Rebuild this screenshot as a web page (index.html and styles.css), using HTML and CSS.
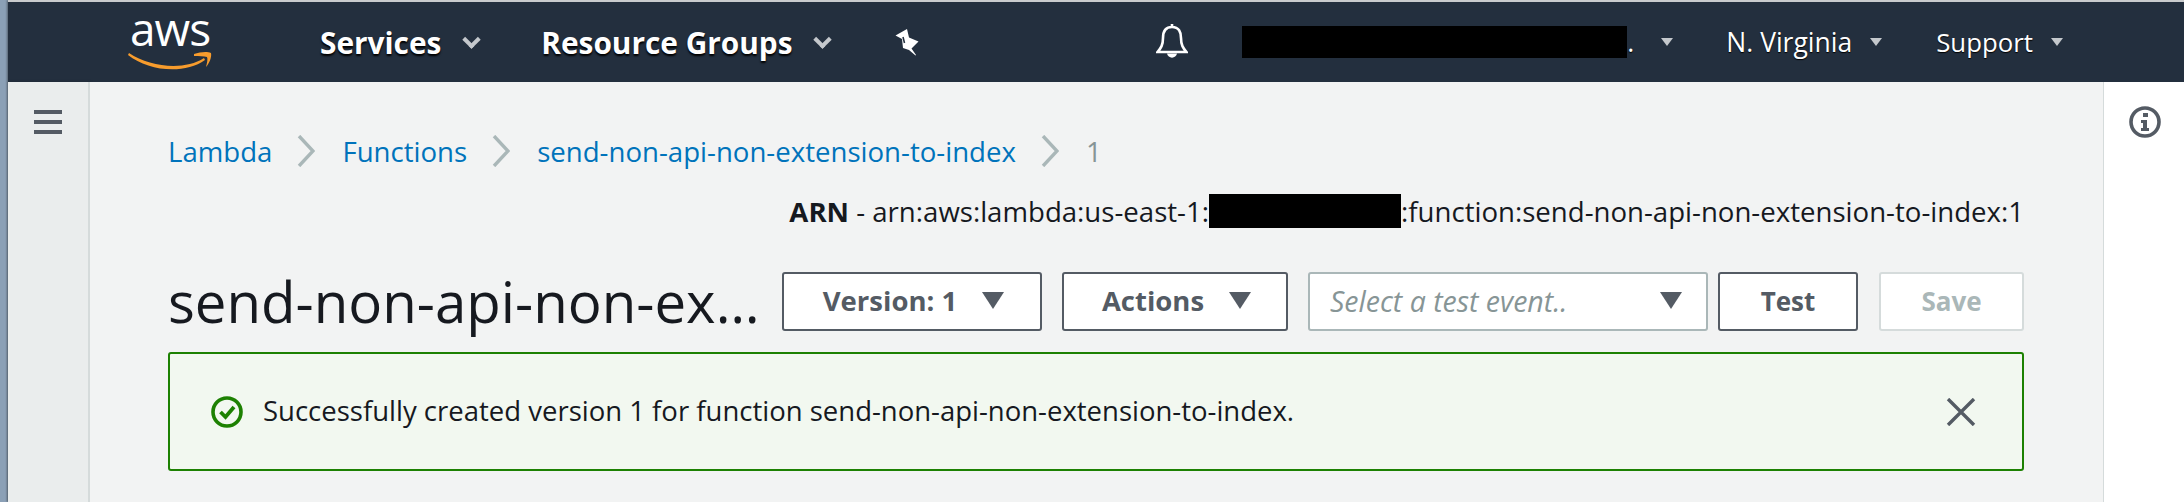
FILE: index.html
```html
<!DOCTYPE html>
<html lang="en">
<head>
    <meta charset="UTF-8">
    <title>Lambda - send-non-api-non-extension-to-index</title>
    <link rel="stylesheet" href="styles.css">
</head>
<body>
    <div class="window">
        <header class="nav">
            <div class="logo">
                <span class="logo-text">aws</span>
                <svg class="logo-smile" width="84" height="20" viewBox="0 0 84 20">
                    <path d="M1 2 C22 16 56 20 76 7 L77 9 C56 24 20 20 0 4 Z" fill="#f79c2d"/>
                    <path d="M66 3 C72 1 79 0 83 2 C84 6 81 13 78 16 C79 12 80 8 79 6 C76 5 71 5 66 5 Z" fill="#f79c2d"/>
                </svg>
            </div>
            <a class="nav-item nav-strong nav-services">Services<span class="caret caret-big"></span></a>
            <a class="nav-item nav-strong nav-groups">Resource Groups<span class="caret caret-big"></span></a>
            <svg class="pin" width="26" height="28" viewBox="0 0 26 28">
                <path d="M1.5 7.5 L13 1 L15 9.5 L24.5 13.5 L17.5 20.5 L22 27 L21.5 27.5 L15 22 L9 20 L8 11 Z" fill="#fff"/>
                <path d="M9 9 L10.5 15" stroke="#232f3e" stroke-width="1.6"/>
            </svg>
            <svg class="bell" width="32" height="36" viewBox="0 0 32 36">
                <path d="M16 0 V3 M16 3 C9 3 7 8 7 14 C7 21 5 24 1.5 28 H30.5 C27 24 25 21 25 14 C25 8 23 3 16 3 Z" fill="none" stroke="#fff" stroke-width="2.6"/>
                <path d="M11 29.5 C12 35 20 35 21 29.5 Z" fill="#fff"/>
            </svg>
            <span class="redacted redacted-account"></span>
            <a class="nav-item nav-dot">.<span class="caret"></span></a>
            <a class="nav-item nav-region">N. Virginia<span class="caret"></span></a>
            <a class="nav-item nav-support">Support<span class="caret"></span></a>
        </header>

        <div class="body-row">
            <aside class="sidebar">
                <div class="hamburger"><span></span><span></span><span></span></div>
            </aside>

            <main class="content">
                <nav class="breadcrumb">
                    <a>Lambda</a>
                    <svg class="crumb-sep" width="18" height="32" viewBox="0 0 18 32"><path d="M2 1 L16 16 L2 31" fill="none" stroke="#aab7b8" stroke-width="3.4"/></svg>
                    <a>Functions</a>
                    <svg class="crumb-sep" width="18" height="32" viewBox="0 0 18 32"><path d="M2 1 L16 16 L2 31" fill="none" stroke="#aab7b8" stroke-width="3.4"/></svg>
                    <a>send-non-api-non-extension-to-index</a>
                    <svg class="crumb-sep" width="18" height="32" viewBox="0 0 18 32"><path d="M2 1 L16 16 L2 31" fill="none" stroke="#aab7b8" stroke-width="3.4"/></svg>
                    <span class="crumb-current">1</span>
                </nav>

                <div class="arn"><b>ARN</b> - arn:aws:lambda:us-east-1:<span class="redacted redacted-arn"></span>:function:send-non-api-non-extension-to-index:1</div>

                <div class="toolbar">
                    <h1 class="title">send-non-api-non-ex…</h1>
                    <button class="btn btn-version">Version: 1<span class="tri"></span></button>
                    <button class="btn btn-actions">Actions<span class="tri"></span></button>
                    <div class="select">
                        <span class="select-text">Select a test event..</span>
                        <span class="tri"></span>
                    </div>
                    <button class="btn btn-test">Test</button>
                    <button class="btn btn-save">Save</button>
                </div>

                <div class="alert">
                    <svg class="alert-icon" width="32" height="32" viewBox="0 0 32 32">
                        <circle cx="16" cy="16" r="14" fill="none" stroke="#1d8102" stroke-width="3.6"/>
                        <path d="M9.5 16 L14.5 21 L23 11" fill="none" stroke="#1d8102" stroke-width="3.8"/>
                    </svg>
                    <span class="alert-text">Successfully created version 1 for function send-non-api-non-extension-to-index.</span>
                    <svg class="alert-close" width="30" height="28" viewBox="0 0 30 28">
                        <path d="M2 1 L28 27 M28 1 L2 27" fill="none" stroke="#545b64" stroke-width="3.4"/>
                    </svg>
                </div>
            </main>

            <aside class="info-panel">
                <svg width="32" height="32" viewBox="0 0 32 32">
                    <circle cx="16" cy="16" r="14" fill="none" stroke="#545b64" stroke-width="3.6"/>
                    <rect x="14" y="7" width="5" height="4" fill="#545b64"/>
                    <path d="M12 14 H18 V22 H20 V25 H12 V22 H14 V17 H12 Z" fill="#545b64"/>
                </svg>
            </aside>
        </div>
    </div>
</body>
</html>
```

FILE: styles.css
```css
html, body {
    margin: 0;
    height: 100%;
    overflow: hidden;
}

body {
    font-family: "Open Sans", "Noto Sans", sans-serif;
    color: #16191f;
    background-color: #8ba0b6;
}

.window {
    margin-left: 8px;
    height: 502px;
    border-top: 2px solid #c9cbcd;
    box-sizing: border-box;
    display: flex;
    flex-direction: column;
    box-shadow: -1px 0 2px rgba(0, 0, 0, 0.4);
}

/* Top navigation */
.nav {
    height: 80px;
    flex: none;
    background-color: #232f3e;
    color: #fff;
    display: flex;
    align-items: center;
    font-size: 26.5px;
}

.logo {
    margin-left: 120px;
    width: 84px;
    display: flex;
    flex-direction: column;
    align-items: center;
    margin-top: -2px;
}

.logo-text {
    font-size: 46px;
    line-height: 34px;
    letter-spacing: -1px;
    color: #fff;
}

.logo-smile {
    margin-top: 6px;
}

.nav-item {
    display: flex;
    align-items: center;
    white-space: nowrap;
    text-shadow: 0 1px 1px #000;
}

.nav-strong {
    font-weight: 700;
    font-size: 29.8px;
    text-shadow: 0 2px 2px #000;
}

.nav-services {
    margin-left: 108px;
}

.nav-groups {
    margin-left: 63px;
}

.caret {
    display: inline-block;
    width: 0;
    height: 0;
    margin-left: 18px;
    border-left: 6px solid transparent;
    border-right: 6px solid transparent;
    border-top: 8px solid #c4c8cc;
}

.caret-big {
    margin-left: 24px;
    width: 13px;
    height: 13px;
    border: 0;
    border-right: 4px solid #c4c8cc;
    border-bottom: 4px solid #c4c8cc;
    box-sizing: border-box;
    transform: rotate(45deg) translate(-2px, -2px);
}

.pin {
    margin-left: 65px;
}

.bell {
    margin-left: auto;
}

.redacted {
    display: inline-block;
    background-color: #000;
}

.redacted-account {
    width: 385px;
    height: 32px;
    margin-left: 54px;
}

.nav-dot .caret {
    margin-left: 27px;
}

.nav-region {
    margin-left: 53px;
}

.nav-support {
    font-size: 25.8px;
    margin-left: 54px;
    margin-right: 121px;
}

/* Main area */
.body-row {
    flex: 1;
    display: flex;
    min-height: 0;
}

.sidebar {
    width: 80px;
    flex: none;
    background-color: #eaeded;
    border-right: 2px solid #d5dbdb;
    box-shadow: 1px 0 3px rgba(0, 0, 0, 0.15);
}

.hamburger {
    width: 28px;
    margin: 28px 0 0 26px;
    display: flex;
    flex-direction: column;
    gap: 6px;
}

.hamburger span {
    height: 4px;
    background-color: #545b64;
}

.content {
    flex: 1;
    min-width: 0;
    background-color: #f2f3f3;
    padding: 51px 79px 0 78px;
}

.breadcrumb {
    display: flex;
    align-items: center;
    height: 36px;
    font-size: 27.6px;
    color: #0073bb;
}

.crumb-sep {
    margin: 0 27px 0 25px;
}

.crumb-current {
    color: #879596;
}

.arn {
    margin-top: 24px;
    height: 36px;
    line-height: 36px;
    text-align: right;
    font-size: 27.6px;
    white-space: nowrap;
}

.redacted-arn {
    width: 192px;
    height: 34px;
    vertical-align: -6px;
}

.toolbar {
    margin-top: 43px;
    height: 59px;
    display: flex;
    align-items: center;
}

.title {
    margin: 0;
    flex: 1;
    font-size: 56.4px;
    font-weight: 400;
    white-space: nowrap;
    overflow: hidden;
}

.btn {
    box-sizing: border-box;
    height: 59px;
    padding: 0 0 2px;
    background-color: #fff;
    border: 2px solid #545b64;
    border-radius: 3px;
    font-family: inherit;
    font-size: 27.5px;
    font-weight: 700;
    color: #545b64;
    display: flex;
    align-items: center;
    justify-content: center;
}

.tri {
    display: inline-block;
    width: 0;
    height: 0;
    border-left: 11px solid transparent;
    border-right: 11px solid transparent;
    border-top: 17px solid #545b64;
}

.btn .tri {
    margin-left: 25px;
}

.btn-version {
    width: 260px;
    padding-left: 3px;
}

.btn-actions {
    width: 226px;
    margin-left: 20px;
    padding-left: 3px;
}

.select {
    box-sizing: border-box;
    width: 400px;
    height: 59px;
    margin-left: 20px;
    padding: 0 24px 2px 20px;
    background-color: #fff;
    border: 2px solid #aab7b8;
    border-radius: 3px;
    display: flex;
    align-items: center;
    justify-content: space-between;
}

.select-text {
    font-size: 28.5px;
    font-style: italic;
    color: #879596;
}

.btn-test {
    width: 140px;
    margin-left: 10px;
    font-size: 26px;
}

.btn-save {
    width: 145px;
    margin-left: 21px;
    font-size: 26px;
    border-color: #d5dbdb;
    color: #aab7b8;
}

.alert {
    box-sizing: border-box;
    height: 119px;
    margin-top: 21px;
    padding: 0 46px 0 41px;
    background-color: #f2f8f0;
    border: 2px solid #1d8102;
    border-radius: 3px;
    display: flex;
    align-items: center;
}

.alert-text {
    flex: 1;
    margin-left: 20px;
    padding-bottom: 2px;
    font-size: 27.5px;
}

.info-panel {
    flex: none;
    width: 81px;
    padding: 24px 0 0 25px;
    box-sizing: border-box;
    background-color: #fff;
    border-left: 1px solid #d5dbdb;
}
```
